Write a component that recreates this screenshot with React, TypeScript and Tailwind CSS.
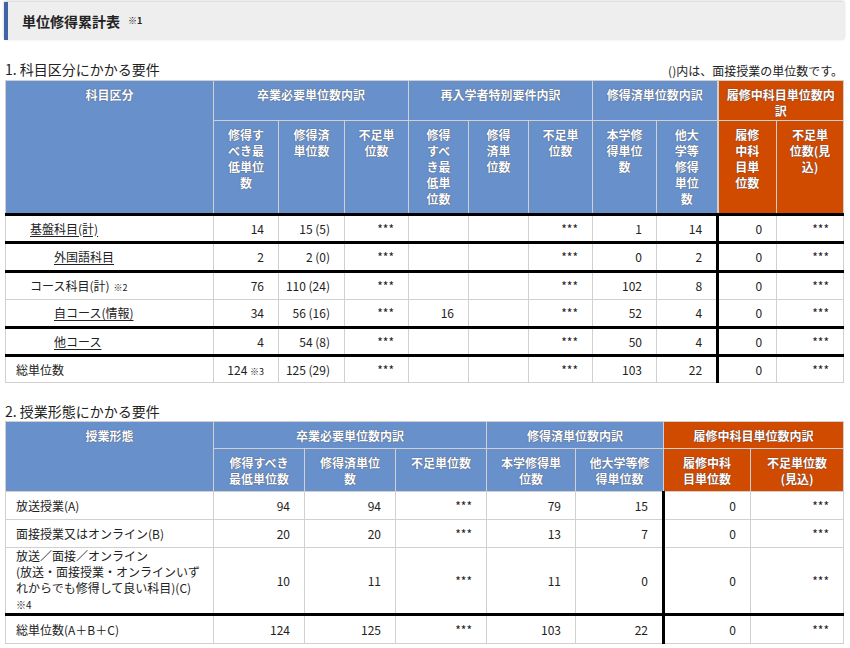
import React from 'react';

const B = 'bg-[#6890cb]';
const O = 'bg-[#d04a00]';
const th = 'border border-[#d0d0d0] text-white font-bold align-top text-center px-1 pt-[6px] leading-[16px] [text-shadow:0_0_1px_#334]';
const td = 'border border-[#d0d0d0] text-right pr-[14px]';

const rows1 = [
  { l: '基盤科目(計)', i: 1, u: true, v: ['14', '15 (5)', '***', '', '', '***', '1', '14', '0', '***'] },
  { l: '外国語科目', i: 2, u: true, v: ['2', '2 (0)', '***', '', '', '***', '0', '2', '0', '***'] },
  { l: 'コース科目(計)', n: '※2', i: 1, v: ['76', '110 (24)', '***', '', '', '***', '102', '8', '0', '***'] },
  { l: '自コース(情報)', i: 2, u: true, g: true, v: ['34', '56 (16)', '***', '16', '', '***', '52', '4', '0', '***'] },
  { l: '他コース', i: 2, u: true, v: ['4', '54 (8)', '***', '', '', '***', '50', '4', '0', '***'] },
  { l: '総単位数', i: 0, v: ['124 ※3', '125 (29)', '***', '', '', '***', '103', '22', '0', '***'] },
];
const h1 = [28, 29, 28, 28, 28, 27];

const rows2 = [
  { l: <>放送授業(A)</>, v: ['94', '94', '***', '79', '15', '0', '***'], h: 28 },
  { l: <>面接授業又はオンライン(B)</>, v: ['20', '20', '***', '13', '7', '0', '***'], h: 28 },
  { l: <>放送／面接／オンライン<br />(放送・面接授業・オンラインいずれからでも修得して良い科目)(C) <span className="text-[10px]">※4</span></>, v: ['10', '11', '***', '11', '0', '0', '***'], h: 59 },
  { l: <>総単位数(A＋B＋C)</>, v: ['124', '125', '***', '103', '22', '0', '***'], h: 29, top: true },
];

export default function App() {
  return (
    <div className="w-[850px] h-[648px] bg-white text-[12px] text-[#222] px-[5px] pt-[2px] overflow-hidden" style={{ fontFamily: '"Noto Sans CJK JP", "Noto Sans", sans-serif' }}>
      <div className="h-[38px] -ml-[1px] w-[840px] bg-[#eeeeee] border-l-4 border-[#3f64a8] shadow-[0_-1px_3px_#ccc] flex items-center pl-[14px] font-bold text-[14px]">
        単位修得累計表 <span className="text-[9px] ml-2">※1</span>
      </div>
      <div className="flex justify-between items-end mt-[20px] h-[20px] pr-[2px]">
        <span className="text-[14px]">1. 科目区分にかかる要件</span>
        <span className="text-[12px]">()内は、面接授業の単位数です。</span>
      </div>
      <table className="border-collapse table-fixed w-[838px]">
        <colgroup>
          {[208, 65, 66, 64, 60, 60, 64, 64, 61, 59, 67].map((w, k) => <col key={k} style={{ width: w }} />)}
        </colgroup>
        <thead>
          <tr className="h-[40px]">
            <th rowSpan={2} className={`${th} ${B}`}>科目区分</th>
            <th colSpan={3} className={`${th} ${B}`}>卒業必要単位数内訳</th>
            <th colSpan={3} className={`${th} ${B}`}>再入学者特別要件内訳</th>
            <th colSpan={2} className={`${th} ${B}`}>修得済単位数内訳</th>
            <th colSpan={2} className={`${th} ${O} border-l-2 border-l-[#d0d0d0]`}>履修中科目単位数内訳</th>
          </tr>
          <tr className="h-[94px]">
            {['修得すべき最低単位数', '修得済単位数', '不足単位数', '修得すべき最低単位数', '修得済単位数', '不足単位数', '本学修得単位数', '他大学等修得単位数'].map((t, k) => (
              <th key={k} className={`${th} ${B} ${k === 3 || k === 7 ? 'px-[14px]' : 'px-[12px]'}`}>{t}</th>
            ))}
            <th className={`${th} ${O} px-[14px] border-l-2 border-l-[#d0d0d0]`}>履修中科目単位数</th>
            <th className={`${th} ${O} px-[10px]`}>不足単位数(見込)</th>
          </tr>
        </thead>
        <tbody>
          {rows1.map((r, k) => (
            <tr key={k} style={{ height: h1[k] }} className={k === 0 ? 'border-t-[3px] border-t-black' : ''}>
              <td className={`border border-[#d0d0d0] ${k > 0 && !r.g ? 'border-t-[3px] border-t-black' : ''} ${r.i === 2 ? 'pl-[48px]' : r.i === 1 ? 'pl-[24px]' : 'pl-[10px]'}`}>
                <span className={r.u ? 'underline underline-offset-2' : ''}>{r.l}</span>
                {r.n && <span className="text-[9px] ml-1">{r.n}</span>}
              </td>
              {r.v.map((v, j) => (
                <td key={j} className={`${td} ${k > 0 && !r.g ? 'border-t-[3px] border-t-black' : ''} ${j === 8 ? 'border-l-[3px] border-l-black pr-[12px]' : ''} ${j === 9 ? 'pr-[10px]' : ''}`}>
                  {v.includes('※') ? <>{v.split(' ')[0]} <span className="text-[9px]">※3</span></> : v}
                </td>
              ))}
            </tr>
          ))}
        </tbody>
      </table>
      <div className="text-[14px] mt-[18px] h-[20px]">2. 授業形態にかかる要件</div>
      <table className="border-collapse table-fixed w-[838px]">
        <colgroup>
          {[208, 91, 91, 91, 89, 88, 87, 93].map((w, k) => <col key={k} style={{ width: w }} />)}
        </colgroup>
        <thead>
          <tr className="h-[27px]">
            <th rowSpan={2} className={`${th} ${B}`}>授業形態</th>
            <th colSpan={3} className={`${th} ${B}`}>卒業必要単位数内訳</th>
            <th colSpan={2} className={`${th} ${B}`}>修得済単位数内訳</th>
            <th colSpan={2} className={`${th} ${O}`}>履修中科目単位数内訳</th>
          </tr>
          <tr className="h-[43px]">
            {['修得すべき最低単位数', '修得済単位数', '不足単位数', '本学修得単位数', '他大学等修得単位数'].map((t, k) => (
              <th key={k} className={`${th} ${B} px-[12px]`}>{t}</th>
            ))}
            <th className={`${th} ${O} px-[14px]`}>履修中科目単位数</th>
            <th className={`${th} ${O} px-[14px]`}>不足単位数(見込)</th>
          </tr>
        </thead>
        <tbody>
          {rows2.map((r, k) => (
            <tr key={k} style={{ height: r.h }}>
              <td className={`border border-[#d0d0d0] pl-[10px] pr-1 leading-[16px] ${r.top ? 'border-t-[3px] border-t-black' : ''}`}>{r.l}</td>
              {r.v.map((v, j) => (
                <td key={j} className={`${td} ${r.top ? 'border-t-[3px] border-t-black' : ''} ${j === 5 ? 'border-l-[3px] border-l-black' : ''}`}>{v}</td>
              ))}
            </tr>
          ))}
        </tbody>
      </table>
    </div>
  );
}
